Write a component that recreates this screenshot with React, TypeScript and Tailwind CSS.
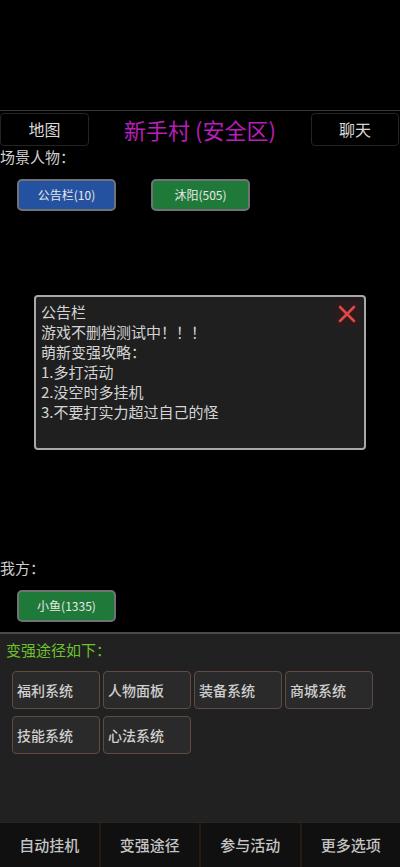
const font = { fontFamily: '"Noto Sans CJK SC", "Noto Sans", sans-serif' }

const notice = [
  '公告栏',
  '游戏不删档测试中！！！',
  '萌新变强攻略：',
  '1.多打活动',
  '2.没空时多挂机',
  '3.不要打实力超过自己的怪',
]

const paths = ['福利系统', '人物面板', '装备系统', '商城系统', '技能系统', '心法系统']
const tabs = ['自动挂机', '变强途径', '参与活动', '更多选项']

const NpcButton = ({ label, color }: { label: string; color: string }) => (
  <button className={`w-[99px] h-[32px] rounded-[5px] border-2 border-[#6f7378] text-[12px] text-[#e8e8e8] ${color}`}>
    {label}
  </button>
)

export default function App() {
  return (
    <div className="w-[400px] h-[867px] bg-black flex flex-col overflow-hidden" style={font}>
      <div className="h-[110px] shrink-0" />
      <div className="h-px bg-[#3a3a3a]" />
      <div className="flex items-center h-[34px] mt-[1px]">
        <button className="w-[89px] h-[33px] rounded-[4px] border border-[#242424] text-[16px] text-[#d8d8d8]">地图</button>
        <div className="flex-1 text-center text-[22px] text-[#b81eb8] leading-none">新手村 (安全区)</div>
        <button className="w-[88px] h-[33px] rounded-[4px] border border-[#242424] text-[16px] text-[#d8d8d8] mr-[1px]">聊天</button>
      </div>
      <div className="text-[15px] text-[#d0d0d0] leading-[20px] mt-[1px]">场景人物：</div>
      <div className="flex gap-[35px] pl-[17px] mt-[12px]">
        <NpcButton label="公告栏(10)" color="bg-[#2452a0]" />
        <NpcButton label="沐阳(505)" color="bg-[#1f7a3a]" />
      </div>

      <div className="ml-[34px] mt-[84px] w-[332px] h-[155px] rounded-[4px] border-2 border-[#a8a8a8] bg-[#1f1f1f] relative pl-[5px] pt-[5px]">
        {notice.map((line) => (
          <div key={line} className="text-[15px] leading-[20px] text-[#d4d4d4]">{line}</div>
        ))}
        <button className="absolute right-[4px] top-[4px] w-[26px] h-[26px] bg-[#2a1c1c] flex items-center justify-center">
          <svg width="18" height="18" viewBox="0 0 18 18">
            <path d="M2 2 L16 16 M16 2 L2 16" stroke="#e04848" strokeWidth="2.6" strokeLinecap="round" />
          </svg>
        </button>
      </div>

      <div className="text-[15px] text-[#d0d0d0] leading-[20px] mt-[108px]">我方：</div>
      <div className="pl-[17px] mt-[12px]">
        <NpcButton label="小鱼(1335)" color="bg-[#1f7a3a]" />
      </div>

      <div className="mt-[10px] border-t-2 border-[#4a4a4a] bg-[#212121] h-[190px] pt-[5px]">
        <div className="pl-[6px] text-[15px] text-[#6cc22c] leading-[22px]">变强途径如下：</div>
        <div className="grid grid-cols-[88px_88px_88px_88px] gap-x-[3px] gap-y-[7px] pl-[12px] mt-[10px]">
          {paths.map((p) => (
            <button key={p} className="h-[38px] rounded-[4px] border border-[#5e4c42] bg-[#2a2a2a] text-left pl-[4px] text-[14px] font-medium text-[#cfcfcf]">
              {p}
            </button>
          ))}
        </div>
      </div>

      <div className="flex-1 flex bg-[#101010] border-t border-[#2e241c]">
        {tabs.map((t, i) => (
          <div
            key={t}
            className={`flex-1 flex items-center justify-center text-[15px] font-medium text-[#c4c4c4] ${i > 0 ? 'border-l-2 border-[#231b14]' : ''}`}
          >
            {t}
          </div>
        ))}
      </div>
    </div>
  )
}
